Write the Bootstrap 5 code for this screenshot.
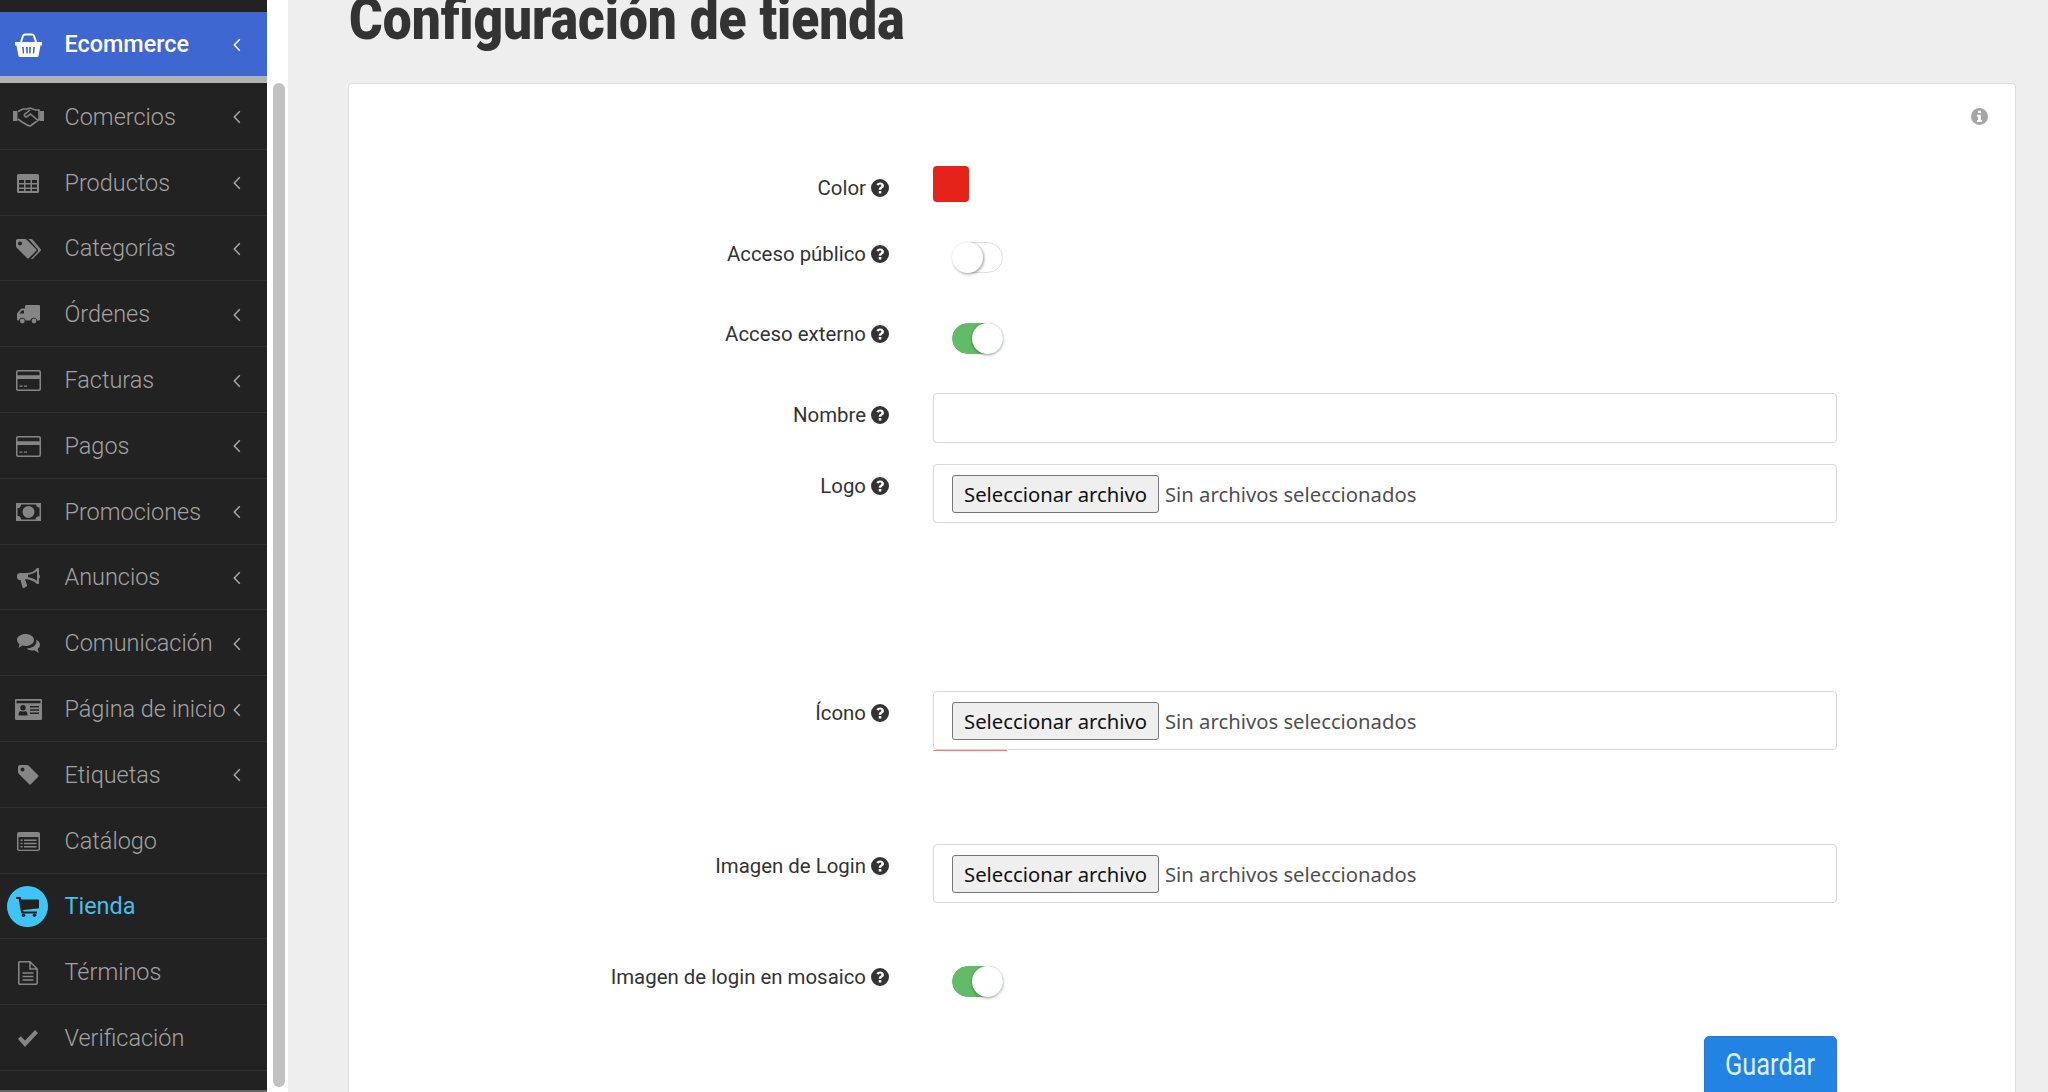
<!DOCTYPE html>
<html lang="es">
<head>
<meta charset="utf-8">
<title>Configuración de tienda</title>
<link rel="stylesheet" href="https://cdn.jsdelivr.net/npm/bootstrap@5.3.0/dist/css/bootstrap.min.css">
<style>
html,body{height:100%;overflow:hidden;background:#eee;font-family:Roboto,"Liberation Sans",sans-serif}
.lienzo{height:1092px}
.lateral{width:267px;flex:none;background:#222;padding-top:12px;border-bottom:2px solid #666}
.ent{height:65.8px;display:flex;align-items:center;padding-top:2px;color:#a3a3a3;font-weight:300;font-size:23.45px;border-bottom:1px solid #2e2e2e;text-decoration:none}
.ent-ico{width:56px;flex:none;display:flex;justify-content:center;align-items:center;margin-right:8.5px;color:#858585}
.ent-txt{flex:1;white-space:nowrap}
.ent-fle{width:8px;height:14px;flex:none;margin-right:26px;color:#a8a8a8}
.ent-activa{height:64px;background:#3f67d2;color:#fff;font-weight:500;font-size:23.4px;border:0}
.ent-activa .ent-ico,.ent-activa .ent-fle{color:#fff}
.separa{height:8px;background:#b2b2b2;border-bottom:1px solid #222}
.ent-tienda{color:#45bfe9;font-weight:400}
.ent-circ{width:41px;height:41px;border-radius:50%;background:#3ec5f6;display:flex;align-items:center;justify-content:center;color:#222;margin-left:-1px;margin-right:1px}
.riel{width:21px;flex:none;background:#fff;padding:83px 3px 5px 6px}
.riel-pulgar{height:100%;width:12px;background:#c1c1c1;border-radius:6px}
.principal{flex:1;padding:0 32px 0 60px;min-width:0}
.titulo{display:inline-block;font-family:Roboto,"Liberation Sans",sans-serif;font-weight:900;font-size:60px;line-height:56px;color:#333;margin:-9px 0 36px 1px;white-space:nowrap;transform:scaleX(.857);transform-origin:left center}
.hoja{background:#fff;border:1px solid #ddd;border-bottom:0;border-radius:4px 4px 0 0;height:1100px;padding:24px 27px 0 0}
.aviso{height:18px;margin-bottom:40px;color:#a6a6a6}
.fila{display:flex}
.etq{width:540px;flex:none;display:flex;justify-content:flex-end;align-items:center;gap:5px;height:24px;margin-right:44px;margin-bottom:0;font-size:20.4px;color:#333;white-space:nowrap}
.etq svg{color:#333}
.bajo{margin-top:10px}
.sube{margin-top:-1px}
.campo{width:904px;flex:none}
.muestra{width:36px;height:36px;background:#e5231b;border-radius:4px}
.conmut{display:block;width:51px;height:31px;margin-left:19px;border:1px solid #dfdfdf;border-radius:16px;background:#fff;position:relative}
.conmut::after{content:"";position:absolute;left:-1px;top:-1px;width:31px;height:31px;border-radius:50%;background:#fff;box-shadow:1px 1px 3px rgba(0,0,0,.4)}
.conmut-on{background:#62bb66;border-color:#62bb66}
.conmut-on::after{left:19px;box-shadow:0 1px 3px rgba(0,0,0,.4)}
.caja{height:50px;border:1px solid #d8d8d8;border-radius:4px;background:#fff;width:100%;display:block}
.caja-arch{height:59px;display:flex;align-items:center;padding:1px 0 0 18px;font-family:"Noto Sans","Open Sans",sans-serif;font-size:20.25px;color:#4f4f4f}
.boton-arch{width:207px;height:38px;padding:0;margin-right:6px;background:#efefef;border:1px solid #767676;border-radius:3px;color:#111;font-size:20.25px;line-height:1;white-space:nowrap}
.raya{width:74px;height:1px;background:#f77}
.m40{margin-bottom:40px}.m50{margin-bottom:50px}.m39{margin-bottom:39px}.m21{margin-bottom:21px}.m168{margin-bottom:168px}.m94{margin-bottom:93px}.m63{margin-bottom:63px}
.guardar{display:block;width:133px;height:64px;margin-left:auto;padding:0 0 8px;background:#2283e3;border:1px solid #2a78d6;border-radius:5px;color:#d9f1ff;font-family:Roboto,"Liberation Sans",sans-serif;font-size:31px;line-height:1}
.guardar-txt{display:inline-block;transform:scaleX(.82);font-weight:400}
</style>
</head>
<body>
<svg width="0" height="0" class="d-none" aria-hidden="true">
<symbol id="i-q" viewBox="0 0 16 16"><path fill="currentColor" fill-rule="evenodd" d="M8 0a8 8 0 1 0 0 16A8 8 0 0 0 8 0zM6.900 10.600h2.300v2.300H6.900zM8.100 3c2 0 3.400 1.200 3.400 2.900 0 1.200-.7 1.900-1.400 2.400-.7.5-.9.7-.9 1.300H6.900c0-1.300.5-2 1.300-2.500.7-.5 1-.8 1-1.300s-.5-.9-1.100-.9-1.200.4-1.600 1L4.800 4.700C5.500 3.700 6.600 3 8.100 3z"/></symbol>
<symbol id="i-info" viewBox="0 0 16 16"><path fill="currentColor" fill-rule="evenodd" d="M8 0a8 8 0 1 0 0 16A8 8 0 0 0 8 0zM6.700 2.600h2.600v2.200H6.700zM5.600 6.300h3.700v4.900h1v1.900H5.600v-1.900h1.100V8.200H5.600z"/></symbol>
<symbol id="i-fle" viewBox="0 0 8 14"><path d="M6.800 1.300 1.300 7l5.500 5.700" fill="none" stroke="currentColor" stroke-width="1.500"/></symbol>
</svg>
<div class="lienzo d-flex">
<nav class="lateral">
 <a class="ent ent-activa" href="#"><span class="ent-ico"><svg width="27" height="24" viewBox="0 0 27 24"><path d="M6 9l2-6q.5-1.500 2-1.500h7q1.500 0 2 1.500l2 6" fill="none" stroke="#fff" stroke-width="2"/><path fill="#fff" fill-rule="evenodd" d="M0 9h27v3.500h-1.500L23.500 23q-.2 1-1.500 1H5q-1.300 0-1.500-1L1.500 12.500H0zM7 14l.8 6.500h1.400L8.700 14zM11 14l.4 6.500h1.400V14zM14.200 14v6.500h1.400l.4-6.500zM18.300 14l-.5 6.500h1.400L20 14z"/></svg></span><span class="ent-txt">Ecommerce</span><svg class="ent-fle"><use href="#i-fle"/></svg></a>
 <div class="separa"></div>
 <a class="ent" href="#"><span class="ent-ico"><svg width="31" height="20" viewBox="0 0 31 20"><g fill="currentColor"><path d="M0 4h4.500v10H0zM26.500 4H31v10h-4.500z"/></g><path d="M5 4.500 10 2h4l3-1 5.500 2H26v9.500l-8 6q-1.500 1-3 0l-6-3.500-4-3M17 3l-5.500 4.500q-.5 2.500 2 2.500l4-3 7.500 6.500" fill="none" stroke="currentColor" stroke-width="1.600"/></svg></span><span class="ent-txt">Comercios</span><svg class="ent-fle"><use href="#i-fle"/></svg></a>
 <a class="ent" href="#"><span class="ent-ico"><svg width="22" height="19" viewBox="0 0 22 19"><path fill="currentColor" fill-rule="evenodd" d="M1.500 0h19Q22 0 22 1.500v16q0 1.500-1.500 1.500h-19Q0 19 0 17.500v-16Q0 0 1.500 0zM2 6v3h5V6zM8.500 6v3h5V6zM15 6v3h5V6zM2 10.500v3h5v-3zM8.500 10.500v3h5v-3zM15 10.500v3h5v-3zM2 15v2h5v-2zM8.500 15v2h5v-2zM15 15v2h5v-2z"/></svg></span><span class="ent-txt">Productos</span><svg class="ent-fle"><use href="#i-fle"/></svg></a>
 <a class="ent" href="#"><span class="ent-ico"><svg width="25" height="20" viewBox="0 0 25 20"><path fill="currentColor" fill-rule="evenodd" d="M1.500 0H9q1 0 2 1l9 9q1 1 0 2l-7 7q-1 1-2 0L2 10Q0 8.500 0 7V1.500Q0 0 1.500 0zM4 2.500a2 2 0 1 0 0 4 2 2 0 0 0 0-4z"/><path fill="currentColor" d="M13 0h2q1 0 2 1l7.500 9q1 1 0 2L17 19.500q-1 1-2 .2l6.500-7q1-1.200 0-2.700L12.500 0z"/></svg></span><span class="ent-txt">Categorías</span><svg class="ent-fle"><use href="#i-fle"/></svg></a>
 <a class="ent" href="#"><span class="ent-ico"><svg width="23" height="19" viewBox="0 0 23 19"><path fill="currentColor" fill-rule="evenodd" d="M9 0h13q1 0 1 1v13.500q0 1-1 1h-2a3.300 3.300 0 0 0-6.500 0H8.500a3.300 3.300 0 0 0-6.500 0H1q-1 0-1-1V9q0-.7.500-1.300L3.800 4Q4.300 3.500 5 3.500h3V1q0-1 1-1zM4.800 5.500 2.500 8.500H7v-3z"/><circle cx="5.300" cy="16" r="2.400" fill="currentColor"/><circle cx="17" cy="16" r="2.400" fill="currentColor"/></svg></span><span class="ent-txt">Órdenes</span><svg class="ent-fle"><use href="#i-fle"/></svg></a>
 <a class="ent" href="#"><span class="ent-ico"><svg width="25" height="21" viewBox="0 0 25 21"><path fill="currentColor" fill-rule="evenodd" d="M2 0h21q2 0 2 2v17q0 2-2 2H2q-2 0-2-2V2q0-2 2-2zM1.500 9v9.500q0 1 1 1h20q1 0 1-1V9zM3.500 15.500h3v1.200h-3zM8 15.500h3v1.200H8zM1.500 2.500v2.800h22V2.500q0-1-1-1h-20q-1 0-1 1z"/></svg></span><span class="ent-txt">Facturas</span><svg class="ent-fle"><use href="#i-fle"/></svg></a>
 <a class="ent" href="#"><span class="ent-ico"><svg width="25" height="21" viewBox="0 0 25 21"><path fill="currentColor" fill-rule="evenodd" d="M2 0h21q2 0 2 2v17q0 2-2 2H2q-2 0-2-2V2q0-2 2-2zM1.500 9v9.500q0 1 1 1h20q1 0 1-1V9zM3.500 15.500h3v1.200h-3zM8 15.500h3v1.200H8zM1.500 2.500v2.800h22V2.500q0-1-1-1h-20q-1 0-1 1z"/></svg></span><span class="ent-txt">Pagos</span><svg class="ent-fle"><use href="#i-fle"/></svg></a>
 <a class="ent" href="#"><span class="ent-ico"><svg width="25" height="18" viewBox="0 0 25 18"><path fill="currentColor" fill-rule="evenodd" d="M0 0h25v18H0zM12.500 3a6 6 0 1 0 0 12 6 6 0 0 0 0-12zM1.500 5v8h.5a3 3 0 0 1 3 3.500h14.500a3 3 0 0 1 4-3V4.500a3 3 0 0 1-3.500-3H5A3 3 0 0 1 1.500 5z"/><path fill="currentColor" fill-rule="evenodd" d="M12.500 3.700a5.300 5.300 0 1 0 0 10.600 5.300 5.300 0 0 0 0-10.600zM12 5.500h1.500v6h1.300v1.200h-4.200v-1.200H12V7.300l-1.200.7-.5-1z"/></svg></span><span class="ent-txt">Promociones</span><svg class="ent-fle"><use href="#i-fle"/></svg></a>
 <a class="ent" href="#"><span class="ent-ico"><svg width="23" height="20" viewBox="0 0 23 20"><path fill="currentColor" fill-rule="evenodd" d="M20 0h1.500q.5 0 .5 1v5.500q1 .5 1 2t-1 2V15q0 1-.5 1H20l-.5-.5Q15 11.500 8 11l2 6q.3 1-.5 1.500L7 20q-1 .2-1.500-.5L3.500 12H3Q0 12 0 9V8q0-3 3-3h6q7 0 10.500-4.500zM20 3q-3.500 3.300-9 3.700v2.600q5.500.4 9 3.700z"/></svg></span><span class="ent-txt">Anuncios</span><svg class="ent-fle"><use href="#i-fle"/></svg></a>
 <a class="ent" href="#"><span class="ent-ico"><svg width="23" height="19" viewBox="0 0 23 19"><path fill="currentColor" d="M8.500 0C13 0 17 2.500 17 6s-4 6-8.500 6q-1.500 0-3-.4L1.500 14l1-3.500Q0 8.500 0 6C0 2.500 4 0 8.500 0z"/><path fill="currentColor" d="M18.500 5.500Q23 7 23 11q0 2.500-2.300 4l1.100 4-4.500-2.700q-1 .2-2.300.2-3.500 0-5.500-2 7.500-.5 9.500-5 .8-2 0-4z"/></svg></span><span class="ent-txt">Comunicación</span><svg class="ent-fle"><use href="#i-fle"/></svg></a>
 <a class="ent" href="#"><span class="ent-ico"><svg width="27" height="21" viewBox="0 0 27 21"><path fill="currentColor" fill-rule="evenodd" d="M1 0h25q1 0 1 1v19q0 1-1 1H1q-1 0-1-1V1q0-1 1-1zM1.500 1.800v2.400h24V1.800zM8 6a2.700 2.700 0 1 0 0 5.400A2.700 2.700 0 0 0 8 6zM3.500 16.500h9q0-4-2-4.500-2 1.200-5 0-2 .5-2 4.500zM15 7v1.500h9V7zM15 10.300v1.500h9v-1.500zM15 13.600v1.500h9v-1.500z"/></svg></span><span class="ent-txt">Página de inicio</span><svg class="ent-fle"><use href="#i-fle"/></svg></a>
 <a class="ent" href="#"><span class="ent-ico"><svg width="21" height="20" viewBox="0 0 21 20"><path fill="currentColor" fill-rule="evenodd" d="M2 0h7q1 0 2 1l9 9q1 1 0 2l-7 7q-1 1-2 0L2 10Q0 8.500 0 7V2q0-2 2-2zM4.500 2.500a2 2 0 1 0 0 4 2 2 0 0 0 0-4z"/></svg></span><span class="ent-txt">Etiquetas</span><svg class="ent-fle"><use href="#i-fle"/></svg></a>
 <a class="ent" href="#"><span class="ent-ico"><svg width="23" height="19" viewBox="0 0 23 19"><path fill="currentColor" fill-rule="evenodd" d="M2 0h19q2 0 2 2v15q0 2-2 2H2q-2 0-2-2V2q0-2 2-2zM1.500 5v12q0 .7.700.7h18.600q.7 0 .7-.7V5zM3.500 7.500h2v1.500h-2zM7 7.500h12.500v1.500H7zM3.500 10.700h2v1.500h-2zM7 10.700h12.500v1.500H7zM3.500 13.900h2v1.500h-2zM7 13.900h12.500v1.500H7z"/></svg></span><span class="ent-txt">Catálogo</span></a>
 <a class="ent ent-tienda" href="#"><span class="ent-ico"><span class="ent-circ"><svg width="23" height="20" viewBox="0 0 23 20"><path fill="currentColor" d="M0 0h4q.8 0 1 1l.3 1.500H22q1 0 1 1v7q0 .9-.9 1L7.200 13l.3 1.500h13.500v2H6q-.8 0-1-1L2.700 2H0z"/><circle cx="7.500" cy="18.200" r="1.800" fill="currentColor"/><circle cx="18.500" cy="18.200" r="1.800" fill="currentColor"/></svg></span></span><span class="ent-txt">Tienda</span></a>
 <a class="ent" href="#"><span class="ent-ico"><svg width="20" height="24" viewBox="0 0 20 24"><path fill="none" stroke="currentColor" stroke-width="1.600" d="M1.500.8h10.500l7.200 7.200v14a1.200 1.200 0 0 1-1.200 1.200H1.500A.8.800 0 0 1 .8 22.400V1.600A.8.800 0 0 1 1.500.8zM12 1v7h7M4.500 12h11M4.500 15.500h11M4.500 19h11"/></svg></span><span class="ent-txt">Términos</span></a>
 <a class="ent" href="#"><span class="ent-ico"><svg width="20" height="17" viewBox="0 0 20 17"><path fill="currentColor" d="M0 9l2.800-2.800 4.200 4.200L17 0l3 3L7 17z"/></svg></span><span class="ent-txt">Verificación</span></a>
</nav>
<div class="riel"><div class="riel-pulgar"></div></div>
<main class="principal">
 <h1 class="titulo">Configuración de tienda</h1>
 <section class="hoja">
  <div class="aviso d-flex justify-content-end"><svg width="17" height="17"><use href="#i-info"/></svg></div>
  <form>
   <div class="fila m40"><label class="etq bajo">Color <svg width="18" height="18"><use href="#i-q"/></svg></label><div class="campo"><div class="muestra"></div></div></div>
   <div class="fila m50"><label class="etq">Acceso público <svg width="18" height="18"><use href="#i-q"/></svg></label><div class="campo"><span class="conmut"></span></div></div>
   <div class="fila m39"><label class="etq sube">Acceso externo <svg width="18" height="18"><use href="#i-q"/></svg></label><div class="campo"><span class="conmut conmut-on"></span></div></div>
   <div class="fila m21"><label class="etq bajo">Nombre <svg width="18" height="18"><use href="#i-q"/></svg></label><div class="campo"><input class="caja" type="text"></div></div>
   <div class="fila m168"><label class="etq bajo">Logo <svg width="18" height="18"><use href="#i-q"/></svg></label><div class="campo"><div class="caja caja-arch"><button type="button" class="boton-arch">Seleccionar archivo</button>Sin archivos seleccionados</div></div></div>
   <div class="fila m94"><label class="etq bajo">Ícono <svg width="18" height="18"><use href="#i-q"/></svg></label><div class="campo"><div class="caja caja-arch"><button type="button" class="boton-arch">Seleccionar archivo</button>Sin archivos seleccionados</div><div class="raya"></div></div></div>
   <div class="fila m63"><label class="etq bajo">Imagen de Login <svg width="18" height="18"><use href="#i-q"/></svg></label><div class="campo"><div class="caja caja-arch"><button type="button" class="boton-arch">Seleccionar archivo</button>Sin archivos seleccionados</div></div></div>
   <div class="fila m39"><label class="etq sube">Imagen de login en mosaico <svg width="18" height="18"><use href="#i-q"/></svg></label><div class="campo"><span class="conmut conmut-on"></span></div></div>
   <div class="fila"><div class="etq"></div><div class="campo"><button type="button" class="guardar"><span class="guardar-txt">Guardar</span></button></div></div>
  </form>
 </section>
</main>
</div>
<script src="https://cdn.jsdelivr.net/npm/bootstrap@5.3.0/dist/js/bootstrap.bundle.min.js"></script>
</body>
</html>
